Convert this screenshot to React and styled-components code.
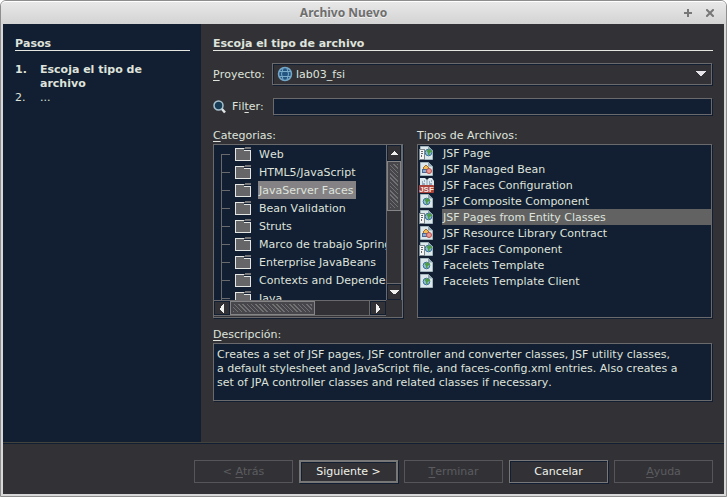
import React from 'react';
import styled, { createGlobalStyle, css } from 'styled-components';

const navy = '#121e31';
const panel = '#323236';
const line = '#6a6a6c';
const text = '#dfe3dc';

const Global = createGlobalStyle`
  * { box-sizing: border-box; }
  html, body { margin: 0; background: #fff; }
  body, button, input, select {
    font-family: "DejaVu Sans", sans-serif;
    font-size: 11px;
    line-height: 14px;
    font-kerning: none;
    color: ${text};
  }
  u { text-underline-offset: 2px; text-decoration-thickness: 1px; text-decoration-skip-ink: none; }
`;

const Window = styled.div`
  min-height: 100vh;
  display: flex;
  flex-direction: column;
  border: 1px solid #8e8e8e;
  border-radius: 6px 6px 0 0;
  background: #d8d8d8;
  padding: 0 2px 2px;
`;

const TitleBar = styled.header`
  height: 23px;
  display: grid;
  grid-template-columns: 20px 1fr 60px;
  align-items: center;
  margin: 0 -2px;
  border-radius: 5px 5px 0 0;
  border-top: 1px solid #fff;
  background: linear-gradient(#e8e8e8, #d3d3d3);
`;

const WindowTitle = styled.h1`
  grid-column: 2;
  margin: 0;
  text-align: center;
  font: bold 12px/18px "Noto Sans", sans-serif;
  color: #6e6e6e;
  text-shadow: 0 1px 0 #f4f4f4;
`;

const WindowButtons = styled.div`
  display: flex;
  justify-content: flex-end;
  gap: 6px;
  padding-right: 8px;
`;

const WindowButton = styled.button`
  display: flex;
  justify-content: center;
  align-items: center;
  width: 16px;
  height: 16px;
  padding: 0;
  border: 0;
  background: none;
`;

const Content = styled.div`
  flex: 1;
  display: grid;
  grid-template-columns: 198px minmax(0, 1fr);
  background: ${panel};
`;

const Steps = styled.aside`
  background: ${navy};
  padding: 12px 11px 12px 12px;
`;

const Heading = styled.h2`
  margin: 0;
  height: 15px;
  font-size: 11px;
  font-weight: bold;
  line-height: 16px;
  border-bottom: 1px solid #e6e6e0;
`;

const StepList = styled.ol`
  list-style: none;
  margin: 12px 0 0;
  padding: 0;
`;

const Step = styled.li`
  display: grid;
  grid-template-columns: 25px 115px;
  font-weight: ${(p) => (p.$current ? 'bold' : 'normal')};
`;

const Form = styled.main`
  display: flex;
  flex-direction: column;
  padding: 12px 12px 41px;
`;

const FormHeading = styled(Heading)`
  margin-right: -1px;
`;

const ProjectRow = styled.div`
  display: flex;
  align-items: center;
  margin-top: 12px;
  height: 22px;
  label { width: 59px; padding-top: 1px; white-space: nowrap; }
`;

const SelectBox = styled.div`
  flex: 1;
  position: relative;
  height: 22px;
  border: 1px solid ${line};
  box-shadow: 1px 1px 0 ${navy}, inset 1px 1px 0 ${navy};
  svg { position: absolute; pointer-events: none; }
`;

const Select = styled.select`
  appearance: none;
  width: 100%;
  height: 20px;
  padding: 1px 24px 0 23px;
  border: 0;
  border-radius: 0;
  background: transparent;
`;

const GlobeMark = styled.svg`
  left: 4px;
  top: 2px;
`;

const ArrowMark = styled.svg`
  right: 5px;
  top: 7px;
`;

const FilterRow = styled.div`
  display: flex;
  align-items: center;
  margin-top: 13px;
  height: 17px;
  label { width: 41px; margin-left: 6px; padding-top: 1px; }
`;

const Field = styled.input`
  flex: 1;
  min-width: 0;
  height: 17px;
  padding: 0 3px;
  border: 1px solid ${line};
  border-radius: 0;
  background: ${navy};
  box-shadow: 1px 1px 0 ${navy};
`;

const Lists = styled.div`
  flex: 1;
  display: grid;
  grid-template-columns: minmax(0, 190fr) minmax(0, 295fr);
  gap: 14px;
  margin-top: 13px;
`;

const Column = styled.section`
  display: flex;
  flex-direction: column;
`;

const Caption = styled.div`
  height: 16px;
  padding-top: 1px;
`;

const Box = styled.div`
  flex: 1;
  border: 1px solid ${line};
  background: ${navy};
  box-shadow: 1px 1px 0 ${navy};
`;

const TreeBox = styled(Box)`
  display: grid;
  grid-template-columns: minmax(0, 1fr) 16px;
  grid-template-rows: 155px 16px;
  background: ${panel};
`;

const Tree = styled.ul`
  list-style: none;
  margin: 0;
  padding: 0;
  overflow: hidden;
  background: ${navy};
  svg { flex: none; }
`;

const TreeItem = styled.li`
  display: flex;
  align-items: center;
  height: 18px;
  white-space: nowrap;
  padding-left: 7px;
`;

const Branch = styled.span`
  flex: none;
  align-self: stretch;
  width: 9px;
  margin-right: 5px;
  background:
    linear-gradient(${line}, ${line}) 0 9px / 9px 1px no-repeat,
    linear-gradient(${line}, ${line}) 0 ${(p) => (p.$first ? '9px' : '0')} / 1px 18px no-repeat;
`;

const TreeLabel = styled.span`
  margin-left: 7px;
  padding: 1px 3px 0 1px;
  height: 18px;
  line-height: 18px;
  background: ${(p) => (p.$selected ? '#848284' : 'transparent')};
`;

const Bar = styled.div`
  display: flex;
  justify-content: space-between;
  background: ${panel};
  ${(p) => p.$vertical
    ? css`flex-direction: column; border-left: 1px solid ${line}; border-right: 1px solid ${line};`
    : css`border-top: 1px solid ${line}; border-bottom: 1px solid ${line};`}
`;

const BarButton = styled.button`
  flex: none;
  display: flex;
  align-items: center;
  justify-content: center;
  width: ${(p) => (p.$vertical ? '14px' : '16px')};
  height: ${(p) => (p.$vertical ? '16px' : '14px')};
  padding: 0;
  border: 1px solid ${navy};
  background: ${panel};
`;

const Track = styled.div`
  flex: 1;
  display: flex;
  flex-direction: ${(p) => (p.$vertical ? 'column' : 'row')};
  border: 0 solid ${line};
  border-width: ${(p) => (p.$vertical ? '0 0 1px' : '0 1px 0 0')};
`;

const Thumb = styled.div`
  flex: 0 0 ${(p) => p.$size};
  border: 1px solid #858587;
  padding: 2px;
  background: repeating-linear-gradient(45deg, #717174 0 1px, #47474b 1px 3px) content-box, #47474b;
`;

const Types = styled.ul`
  list-style: none;
  margin: 0;
  padding: 0 0 0 1px;
`;

const TypeItem = styled.li`
  display: flex;
  height: 16px;
  svg { flex: none; }
  > span {
    flex: 1;
    margin-left: 7px;
    padding: 1px 0 0 1px;
    line-height: 16px;
    background: ${(p) => (p.$selected ? '#626262' : 'transparent')};
  }
`;

const DescriptionCaption = styled(Caption)`
  margin-top: 9px;
`;

const Description = styled.p`
  height: 58px;
  margin: 0;
  padding: 4px 3px;
  border: 1px solid ${line};
  background: ${navy};
  box-shadow: 1px 1px 0 ${navy};
`;

const Footer = styled.footer`
  display: flex;
  justify-content: flex-end;
  gap: 6px;
  padding: 17px 11px 11px;
  border-top: 1px solid #42423e;
  background: ${panel};
  box-shadow: inset 0 1px 0 ${navy};
`;

const Button = styled.button`
  width: 99px;
  height: 23px;
  padding: 1px 0 0;
  border-radius: 0;
  border: ${(p) => (p.$primary ? '2px solid #777778' : '1px solid #777779')};
  background: ${panel};
  color: #f0f2ea;
  box-shadow: 1px 1px 0 ${navy}, inset 1px 1px 0 ${navy};
  &:disabled { color: #5c5c60; border-color: #56565a; box-shadow: none; }
`;

const Folder = () => (
  <svg width="16" height="14" shapeRendering="crispEdges" aria-hidden="true">
    <path d="M10 0h6v2H9V1h1z" fill="#77777a" />
    <path d="M1 2h8v2h6v9H1z" fill="#666668" />
    <path d="M0 1h9v1H1v11h14V4H9V3h7v11H0z" fill="#e4e6e4" />
  </svg>
);

const triangles = {
  up: 'M4 0h1v1h1v1h1v1h1v1H1V3h1V2h1V1h1z',
  down: 'M0 0h9v1H8v1H7v1H6v1H3V3H2V2H1V1H0z',
  left: 'M4 0v9H3V8H2V7H1V6H0V4h1V2h1V1h1V0z',
  right: 'M0 0v9h1V8h1V7h1V6h1V4H3V2H2V1H1V0z',
};

const Triangle = ({ dir }) => {
  const flat = dir === 'up' || dir === 'down';
  return (
    <svg width={flat ? 9 : 4} height={flat ? 4 : 9} shapeRendering="crispEdges" aria-hidden="true">
      <path d={triangles[dir]} fill="#f0f0ee" />
    </svg>
  );
};

const FileIcon = ({ kind }) => (
  <svg width="16" height="16" viewBox="0 0 16 16" aria-hidden="true">
    {kind === 'config' ? (
      <g>
        <path d="M1 1h5l2 2 2-2h3l2 3v7H1z" fill="#dce9ef" />
        <path d="M8 3v6" stroke="#8aa3b1" />
        <path d="M3 5h1M5 4h1M10 5h1M12 4h1M3 7h3M10 7h3" stroke="#496d93" strokeWidth="1" />
        <rect x="0" y="8" width="15" height="8" rx="1" fill="#a9433c" />
        <text x="7.5" y="15" textAnchor="middle" fontSize="8" fontWeight="bold" fontFamily="Liberation Sans, sans-serif" fill="#f8e6e3">JSF</text>
      </g>
    ) : (
      <g>
        <path d="M1.500 1.500h8l4 4v9h-12z" fill="#dce8ec" stroke="#a3b5bd" />
        <path d="M9 1v4.500h5z" fill="#8fa5b1" />
        {kind === 'bean' ? (
          <g>
            <path d="M7 4l3 3-3 3-3-3z" fill="#f2bd55" stroke="#a46d2c" />
            <rect x="3.500" y="8.500" width="4" height="3" fill="#8fadd2" stroke="#4d668f" />
            <circle cx="10" cy="10" r="2.500" fill="#e99a91" stroke="#b94e4a" />
          </g>
        ) : (
          <g transform={kind === 'page' ? 'translate(2 -1)' : undefined}>
            <circle cx="7.500" cy="8.500" r="3.300" fill="#8cc0d8" stroke="#396f99" />
            <path d="M6 7.500l2.500-1.500 1.500 1.500-2.500 1 .5 2.500" fill="none" stroke="#4f9c43" strokeWidth="1.600" />
          </g>
        )}
        {kind === 'page' && (
          <g shapeRendering="crispEdges">
            <path d="M0 4h6v11H0z" fill="#7c888e" />
            <path d="M1 5h4v9H1z" fill="#f4f5f2" />
            <path d="M2 6h2v1H2zM2 8h2v1H2zM2 10h1v2H2z" fill="#62696c" />
          </g>
        )}
      </g>
    )}
  </svg>
);

const categories = [
  'Web', 'HTML5/JavaScript', 'JavaServer Faces', 'Bean Validation', 'Struts',
  'Marco de trabajo Spring', 'Enterprise JavaBeans', 'Contexts and Dependency Injection', 'Java',
];

const types = [
  ['JSF Page', 'page'], ['JSF Managed Bean', 'bean'], ['JSF Faces Configuration', 'config'],
  ['JSF Composite Component', 'web'], ['JSF Pages from Entity Classes', 'page'],
  ['JSF Resource Library Contract', 'bean'], ['JSF Faces Component', 'page'],
  ['Facelets Template', 'web'], ['Facelets Template Client', 'web'],
];

export default function App() {
  return (
    <>
      <Global />
      <Window>
        <TitleBar>
          <WindowTitle>Archivo Nuevo</WindowTitle>
          <WindowButtons>
            <WindowButton aria-label="Maximizar">
              <svg width="8" height="8"><path d="M4 0v8M0 4h8" stroke="#777" strokeWidth="2" /></svg>
            </WindowButton>
            <WindowButton aria-label="Cerrar">
              <svg width="8" height="8"><path d="M1 1l6 6M7 1l-6 6" stroke="#777" strokeWidth="2" strokeLinecap="square" /></svg>
            </WindowButton>
          </WindowButtons>
        </TitleBar>
        <Content>
          <Steps>
            <Heading>Pasos</Heading>
            <StepList>
              <Step $current><span>1.</span><span>Escoja el tipo de archivo</span></Step>
              <Step><span>2.</span><span>...</span></Step>
            </StepList>
          </Steps>
          <Form>
            <FormHeading>Escoja el tipo de archivo</FormHeading>
            <ProjectRow>
              <label htmlFor="project"><u>P</u>royecto:</label>
              <SelectBox>
                <GlobeMark width="16" height="16" aria-hidden="true">
                  <circle cx="8" cy="8" r="6.500" fill="#245580" stroke="#74a7c7" strokeWidth="1.500" />
                  <path d="M2 5.500h12M2 10.500h12M6 2.500q-3 5.500 0 11M10 2.500q3 5.500 0 11" fill="none" stroke="#79accb" />
                </GlobeMark>
                <Select id="project"><option>lab03_fsi</option></Select>
                <ArrowMark width="10" height="5" shapeRendering="crispEdges" aria-hidden="true">
                  <path d="M0 0h10v1H9v1H8v1H7v1H6v1H4V4H3V3H2V2H1V1H0z" fill="#e5e3e8" />
                </ArrowMark>
              </SelectBox>
            </ProjectRow>
            <FilterRow>
              <svg width="13" height="14" aria-hidden="true">
                <path d="M8 8l4 4.500" stroke="#dfe4e5" strokeWidth="2.500" />
                <circle cx="5.500" cy="5.500" r="4.500" fill="#173c55" stroke="#a9c2cf" strokeWidth="1.500" />
              </svg>
              <label htmlFor="filter">Fil<u>t</u>er:</label>
              <Field id="filter" />
            </FilterRow>
            <Lists>
              <Column>
                <Caption><u>C</u>ategorias:</Caption>
                <TreeBox>
                  <Tree>
                    {categories.map((name, i) => (
                      <TreeItem key={name}>
                        <Branch $first={i === 0} />
                        <Folder />
                        <TreeLabel $selected={i === 2}>{name}</TreeLabel>
                      </TreeItem>
                    ))}
                  </Tree>
                  <Bar $vertical>
                    <BarButton $vertical aria-label="Subir"><Triangle dir="up" /></BarButton>
                    <Track $vertical><Thumb $size="50px" /></Track>
                    <BarButton $vertical aria-label="Bajar"><Triangle dir="down" /></BarButton>
                  </Bar>
                  <Bar>
                    <BarButton aria-label="Izquierda"><Triangle dir="left" /></BarButton>
                    <Track><Thumb $size="61%" /></Track>
                    <BarButton aria-label="Derecha"><Triangle dir="right" /></BarButton>
                  </Bar>
                </TreeBox>
              </Column>
              <Column>
                <Caption>Tipos de Archivos:</Caption>
                <Box>
                  <Types>
                    {types.map(([name, kind], i) => (
                      <TypeItem key={name} $selected={i === 4}><FileIcon kind={kind} /><span>{name}</span></TypeItem>
                    ))}
                  </Types>
                </Box>
              </Column>
            </Lists>
            <DescriptionCaption><u>D</u>escripción:</DescriptionCaption>
            <Description>
              Creates a set of JSF pages, JSF controller and converter classes, JSF utility classes,<br />
              a default stylesheet and JavaScript file, and faces-config.xml entries. Also creates a<br />
              set of JPA controller classes and related classes if necessary.
            </Description>
          </Form>
        </Content>
        <Footer>
          <Button disabled>&lt; <u>A</u>trás</Button>
          <Button $primary>Siguiente &gt;</Button>
          <Button disabled><u>T</u>erminar</Button>
          <Button>Cancelar</Button>
          <Button disabled><u>A</u>yuda</Button>
        </Footer>
      </Window>
    </>
  );
}
